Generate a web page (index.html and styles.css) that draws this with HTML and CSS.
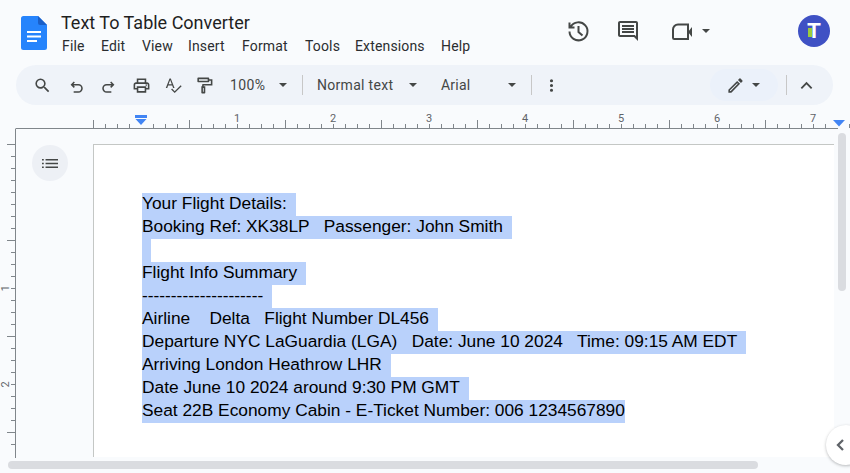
FILE: index.html
```html
<!DOCTYPE html>
<html lang="en">
<head>
<meta charset="utf-8">
<title>Text To Table Converter</title>
<link rel="stylesheet" href="styles.css">
</head>
<body>
<header class="header">
  <svg class="logo" viewBox="0 0 26 34"><path class="logo-sheet" d="M2.5 0H17l9 9v22.5a2.5 2.5 0 0 1-2.500 2.500H2.500A2.500 2.500 0 0 1 0 31.500V2.500A2.500 2.500 0 0 1 2.500 0z"/><path class="logo-fold" d="M17 0l9 9h-7a2 2 0 0 1-2-2z"/><path class="logo-line" d="M6 15h14v2H6zm0 4.500h14v2H6zm0 4.500h10v2H6z"/></svg>
  <div class="title-block">
    <div class="doc-title">Text To Table Converter</div>
    <nav class="menu"><span>File</span><span>Edit</span><span>View</span><span>Insert</span><span>Format</span><span>Tools</span><span>Extensions</span><span>Help</span></nav>
  </div>
  <div class="header-actions">
    <svg class="head-icon history" viewBox="0 0 24 24"><path class="head-line" d="M4.600 8a9 9 0 1 1-1.100 4.500M3.500 3.500V8.500H8.500M12.500 7v6l4 3.500"/></svg>
    <svg class="head-icon comment" viewBox="0 0 24 24"><path d="M22 4c0-1.100-.9-2-2-2H4c-1.100 0-2 .9-2 2v12c0 1.100.9 2 2 2h14l4 4V4zm-2 13.170L18.830 16H4V4h16v13.170zM6 12h12v2H6zm0-3h12v2H6zm0-3h12v2H6z"/></svg>
    <svg class="head-icon video" viewBox="0 0 24 24"><path class="head-line" d="M7 5.500H17V20H3.200A1.200 1.200 0 0 1 2 18.800V10.500a5 5 0 0 1 5-5z"/><path d="M17 13l4-5v10z"/></svg>
    <span class="caret caret-head"></span>
    <div class="avatar"><span class="avatar-letter">T</span><span class="avatar-leaf"></span></div>
  </div>
</header>

<div class="toolbar">
  <span class="slot w32"><svg class="tool" viewBox="0 0 24 24"><path d="M15.500 14h-.79l-.28-.27A6.471 6.471 0 0 0 16 9.500 6.500 6.500 0 1 0 9.500 16c1.610 0 3.090-.59 4.230-1.570l.27.280v.79l5 4.990L20.490 19l-4.990-5zm-6 0C7.010 14 5 11.990 5 9.500S7.010 5 9.500 5 14 7.010 14 9.500 11.990 14 9.500 14z"/></svg></span>
  <span class="slot w38"><svg class="tool-sm" viewBox="0 0 24 24"><path class="line" d="M8 4.500L4 8.500l4 4M4.500 8.500H14a5.500 5.500 0 0 1 0 11H7"/></svg></span>
  <span class="slot w24"><svg class="tool-sm" viewBox="0 0 24 24"><path class="line" d="M16 4.500l4 4-4 4M19.500 8.500H10a5.500 5.500 0 0 0 0 11h7"/></svg></span>
  <span class="slot w42"><svg class="tool" viewBox="0 0 24 24"><path d="M19 8h-1V3H6v5H5c-1.660 0-3 1.340-3 3v6h4v4h12v-4h4v-6c0-1.660-1.340-3-3-3zM8 5h8v3H8V5zm8 14H8v-4h8v4zm4-4h-2v-2H6v2H4v-4c0-.55.45-1 1-1h14c.55 0 1 .45 1 1v4z"/><circle cx="18" cy="11.500" r="1"/></svg></span>
  <span class="slot w22"><svg class="tool" viewBox="0 0 24 24"><path d="M11.450 15h1.900L8.600 3H7L2.250 15h1.900l1.050-3h5.200l1.050 3zM5.800 10.300L7.800 5l2 5.300H5.800zm15.300 1.300l-7.600 7.600-3.300-3.300-1.200 1.200 4.500 4.500 8.800-8.800-1.200-1.200z"/></svg></span>
  <span class="slot w40"><svg class="tool" viewBox="0 0 24 24"><path d="M18 4V3c0-.55-.45-1-1-1H4c-.55 0-1 .45-1 1v4c0 .55.45 1 1 1h13c.55 0 1-.45 1-1V6h2v4H10c-.55 0-1 .45-1 1v2H8v8c0 .55.45 1 1 1h3c.55 0 1-.45 1-1v-8h-2v-1h11V4h-4zm-2 2H5V4h11v2zm-5 14H10v-5h1v5z"/></svg></span>
  <span class="tool-text zoom-level">100%</span>
  <span class="caret caret-zoom"></span>
  <span class="divider divider-a"></span>
  <span class="tool-text style-name">Normal text</span>
  <span class="caret caret-style"></span>
  <span class="tool-text font-name">Arial</span>
  <span class="caret caret-font"></span>
  <span class="divider divider-b"></span>
  <svg class="tool more" viewBox="0 0 24 24"><path d="M12 8a2 2 0 1 0 0-4 2 2 0 0 0 0 4zm0 2a2 2 0 1 0 0 4 2 2 0 0 0 0-4zm0 6a2 2 0 1 0 0 4 2 2 0 0 0 0-4z"/></svg>
  <div class="mode-pill">
    <svg class="tool" viewBox="0 0 24 24"><path d="M3 17.250V21h3.750L17.810 9.940l-3.750-3.750L3 17.250zM5.920 19H5v-.92l9.060-9.060.92.92L5.920 19zM20.710 7.040a.996.996 0 0 0 0-1.410l-2.340-2.340a1.001 1.001 0 0 0-1.410 0l-1.830 1.830 3.750 3.750 1.830-1.830z"/></svg>
    <span class="caret caret-mode"></span>
  </div>
  <span class="divider divider-c"></span>
  <svg class="tool collapse" viewBox="0 0 24 24"><path class="line" d="M5.500 15.500L12 9l6.500 6.500"/></svg>
</div>

<svg class="ruler" viewBox="0 0 850 24">
  <path class="ruler-line" d="M15.500 23.500H838"/>
  <path class="ruler-line" d="M93.500 15v8M105.500 19v4M117.500 19v4M129.500 19v4M153.500 19v4M165.500 19v4M177.500 19v4M189.500 15v8M201.500 19v4M213.500 19v4M225.500 19v4M237.500 19v4M249.500 19v4M261.500 19v4M273.500 19v4M285.500 15v8M297.500 19v4M309.500 19v4M321.500 19v4M333.500 19v4M345.500 19v4M357.500 19v4M369.500 19v4M381.500 15v8M393.500 19v4M405.500 19v4M417.500 19v4M429.500 19v4M441.500 19v4M453.500 19v4M465.500 19v4M477.500 15v8M489.500 19v4M501.500 19v4M513.500 19v4M525.500 19v4M537.500 19v4M549.500 19v4M561.500 19v4M573.500 15v8M585.500 19v4M597.500 19v4M609.500 19v4M621.500 19v4M633.500 19v4M645.500 19v4M657.500 19v4M669.500 15v8M681.500 19v4M693.500 19v4M705.500 19v4M717.500 19v4M729.500 19v4M741.500 19v4M753.500 19v4M765.500 15v8M777.500 19v4M789.500 19v4M801.500 19v4M813.500 19v4M825.500 19v4M849.500 19v4"/>
  <text class="ruler-num" x="237" y="17">1</text><text class="ruler-num" x="333" y="17">2</text><text class="ruler-num" x="429" y="17">3</text><text class="ruler-num" x="525" y="17">4</text><text class="ruler-num" x="621" y="17">5</text><text class="ruler-num" x="717" y="17">6</text><text class="ruler-num" x="813" y="17">7</text>
  <path class="marker" d="M135 10h12v3h-12zM135.500 14h11L141 20z"/>
  <path class="marker" d="M833 15h12l-6 6.500z"/>
</svg>

<main class="workspace">
  <aside class="gutter">
    <svg class="v-ruler" viewBox="0 0 16 330">
      <path class="ruler-line" d="M15.500 0v329M7 15.500h8M11 27.500h4M11 39.500h4M11 51.500h4M11 63.500h4M11 75.500h4M11 87.500h4M11 99.500h4M7 111.500h8M11 123.500h4M11 135.500h4M11 147.500h4M11 159.500h4M11 171.500h4M11 183.500h4M11 195.500h4M7 207.500h8M11 219.500h4M11 231.500h4M11 243.500h4M11 255.500h4M11 267.500h4M11 279.500h4M11 291.500h4M7 303.500h8M11 315.500h4"/>
      <text class="ruler-num" transform="translate(9 159.500) rotate(-90)">1</text>
      <text class="ruler-num" transform="translate(9 255.500) rotate(-90)">2</text>
    </svg>
    <div class="outline-btn"><svg class="outline-icon" viewBox="0 0 18 12"><path d="M0 1h2v1.500H0zM4 1h14v1.500H4zM0 5.250h2v1.500H0zM4 5.250h14v1.500H4zM0 9.500h2V11H0zM4 9.500h14V11H4z"/></svg></div>
  </aside>
  <section class="page">
    <div class="sel">Your Flight Details:</div>
    <div class="sel">Booking Ref: XK38LP   Passenger: John Smith</div>
    <div class="sel sel-empty">&nbsp;</div>
    <div class="sel">Flight Info Summary</div>
    <div class="sel">---------------------</div>
    <div class="sel">Airline    Delta   Flight Number DL456</div>
    <div class="sel">Departure NYC LaGuardia (LGA)   Date: June 10 2024   Time: 09:15 AM EDT</div>
    <div class="sel">Arriving London Heathrow LHR</div>
    <div class="sel">Date June 10 2024 around 9:30 PM GMT</div>
    <div class="sel sel-last">Seat 22B Economy Cabin - E-Ticket Number: 006 1234567890</div>
  </section>
</main>

<div class="scroll-v"></div>
<div class="scroll-h"></div>
<div class="side-toggle"><svg class="side-chevron" viewBox="0 0 10 14"><path class="line" d="M8 2L3 7l5 5"/></svg></div>
</body>
</html>
```

FILE: styles.css
```css
* { box-sizing: border-box; }
html, body { margin: 0; height: 473px; overflow: hidden; }
body {
  position: relative;
  width: 850px;
  background: #f9fbfd;
  font-family: Roboto, "Liberation Sans", sans-serif;
  color: #1f1f1f;
}
svg { display: block; flex: none; fill: #444746; }
.line { fill: none; stroke: #444746; stroke-width: 2.300; }

/* Header */
.header { display: flex; height: 65px; position: relative; }
.logo { width: 26px; height: 34px; margin: 16px 14px 0 21px; }
.logo-sheet { fill: #2684fc; }
.logo-fold { fill: #1a5fc8; }
.logo-line { fill: #fff; }
.title-block { padding-top: 12px; }
.doc-title { font-size: 18px; line-height: 22px; white-space: nowrap; }
.menu { display: flex; margin-top: 1px; margin-left: 1px; font-size: 14px; line-height: 22px; letter-spacing: .15px; color: #2b2d30; }
.menu span:nth-child(1) { width: 39px; }
.menu span:nth-child(2) { width: 41px; }
.menu span:nth-child(3) { width: 46px; }
.menu span:nth-child(4) { width: 54px; }
.menu span:nth-child(5) { width: 63px; }
.menu span:nth-child(6) { width: 50px; }
.menu span:nth-child(7) { width: 86px; }
.header-actions { display: flex; align-items: center; margin-left: auto; padding-right: 20px; height: 61px; }
.head-icon { width: 24px; height: 24px; }
.head-line { fill: none; stroke: #444746; stroke-width: 2; }
.comment { margin-left: 26px; }
.video { margin-left: 31px; }
.caret { display: block; flex: none; width: 8px; height: 4px; border: 4px solid transparent; border-top-color: #444746; border-bottom-width: 0; }
.caret-head { margin-left: 7px; }
.avatar { position: relative; width: 32px; height: 32px; margin-left: 88px; border-radius: 50%; background: #3f51c4; text-align: center; }
.avatar-letter { font: 700 22px/32px "Liberation Sans", sans-serif; color: #fff; }
.avatar-leaf { position: absolute; left: 10px; top: 13px; width: 4px; height: 9px; background: #9ccc3c; }

/* Toolbar */
.toolbar { display: flex; align-items: center; width: 817px; height: 40px; margin-left: 16px; padding-left: 10px; border-radius: 20px; background: #eff3f9; }
.slot { display: flex; justify-content: center; flex: none; }
.w22 { width: 22px; } .w24 { width: 24px; } .w32 { width: 32px; } .w38 { width: 38px; } .w40 { width: 40px; } .w42 { width: 42px; }
.tool { width: 19px; height: 19px; }
.tool-sm { width: 16px; height: 16px; margin-top: 4px; }
.tool-text { font-size: 14px; line-height: 20px; letter-spacing: .2px; color: #444746; white-space: nowrap; }
.zoom-level { margin-left: 6px; width: 38px; letter-spacing: .4px; }
.caret-zoom { margin-left: 11px; }
.divider { flex: none; width: 1px; height: 20px; background: #c7c7c7; }
.divider-a { margin-left: 15px; }
.style-name { margin-left: 14px; width: 77px; letter-spacing: .3px; }
.caret-style { margin-left: 14.500px; }
.font-name { margin-left: 24.500px; width: 30px; }
.caret-font { margin-left: 37px; }
.divider-b { margin-left: 15px; }
.more { margin-left: 10px; }
.mode-pill { display: flex; align-items: center; width: 68px; height: 32px; margin-left: 149px; padding-left: 16px; border-radius: 16px; background: #ebf1fa; }
.caret-mode { margin-left: 7px; }
.divider-c { margin-left: 8px; }
.collapse { margin-left: 9.500px; }

/* Rulers */
.ruler { width: 850px; height: 24px; }
.ruler-line { fill: none; stroke: #80868b; stroke-width: 1; }
.ruler-num { font: 11px Roboto, sans-serif; fill: #5f6368; text-anchor: middle; }
.marker { fill: #4285f4; }

/* Workspace */
.workspace { display: flex; height: 329px; margin-top: -1px; position: relative; }
.gutter { position: relative; width: 93px; flex: none; }
.v-ruler { width: 16px; height: 330px; margin-top: 1px; }
.outline-btn { position: absolute; left: 32px; top: 17px; width: 36px; height: 36px; border-radius: 50%; background: #edf0f5; display: flex; align-items: center; justify-content: center; }
.outline-icon { width: 16px; height: 11px; }
.page { width: 741px; height: 313px; margin-top: 16px; padding: 48px 0 0 48px; background: #fff; border-left: 1px solid #c4c7c5; border-top: 1px solid #c4c7c5; font: 17.330px/21px "Liberation Sans", Arial, sans-serif; color: #000; }
.sel { width: fit-content; height: 23px; padding-right: 9px; background: #b9d1fb; white-space: pre; }
.sel-empty { width: 9px; padding: 0; }
.sel-last { padding-right: 0; }

/* Overlays */
.scroll-v { position: absolute; left: 838px; top: 133px; width: 8px; height: 158px; border-radius: 4px; background: #dadce0; }
.scroll-h { position: absolute; left: 8px; top: 461px; width: 750px; height: 8px; border-radius: 4px; background: #dadce0; }
.side-toggle { position: absolute; left: 826px; top: 425px; width: 40px; height: 40px; padding: 13px 0 0 9px; border-radius: 50%; background: #fff; box-shadow: 0 1px 3px rgba(60, 64, 67, .35); }
.side-chevron { width: 10px; height: 14px; }
.side-chevron .line { stroke: #5f6368; }
```
